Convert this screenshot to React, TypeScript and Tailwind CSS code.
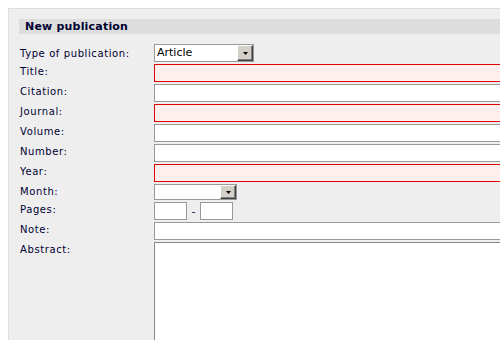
type Row = {
  label: string;
  kind: 'text' | 'required' | 'select' | 'month' | 'pages' | 'area';
};

const rows: Row[] = [
  { label: 'Type of publication:', kind: 'select' },
  { label: 'Title:', kind: 'required' },
  { label: 'Citation:', kind: 'text' },
  { label: 'Journal:', kind: 'required' },
  { label: 'Volume:', kind: 'text' },
  { label: 'Number:', kind: 'text' },
  { label: 'Year:', kind: 'required' },
  { label: 'Month:', kind: 'month' },
  { label: 'Pages:', kind: 'pages' },
  { label: 'Note:', kind: 'text' },
  { label: 'Abstract:', kind: 'area' },
];

const DropButton = () => (
  <div className="flex h-full w-4 items-center justify-center border border-t-white border-l-white border-r-[#404040] border-b-[#404040] bg-[#d4d0c8] shadow-[inset_-1px_-1px_0_#808080]">
    <svg width="5" height="3" viewBox="0 0 5 3">
      <polygon points="0,0 5,0 2.5,3" fill="#000" />
    </svg>
  </div>
);

const Select = ({ value, width }: { value: string; width: string }) => (
  <div className={`flex ${width} items-stretch border border-[#999] bg-white`}>
    <span className="flex-1 pl-[2px] text-[11px] leading-[16px] text-black">{value}</span>
    <DropButton />
  </div>
);

const Field = ({ kind }: { kind: Row['kind'] }) => {
  switch (kind) {
    case 'select':
      return <Select value="Article" width="w-[100px] h-[18px]" />;
    case 'month':
      return <Select value="" width="w-[83px] h-[16px]" />;
    case 'required':
      return <div className="h-[18px] w-[400px] border border-[#d00] bg-[#ffeeee]" />;
    case 'pages':
      return (
        <div className="flex items-center">
          <div className="h-[18px] w-[33px] border border-[#999] bg-white" />
          <span className="w-[13px] text-center text-[10px] text-[#000033]">-</span>
          <div className="h-[18px] w-[33px] border border-[#999] bg-white" />
        </div>
      );
    case 'area':
      return <div className="h-[120px] w-[400px] border border-[#888] bg-white" />;
    default:
      return <div className="h-[18px] w-[400px] border border-[#999] bg-white" />;
  }
};

export default function App() {
  return (
    <div className="h-[340px] w-[500px] overflow-hidden bg-white pl-2 pt-2 font-['Verdana','DejaVu_Sans',sans-serif]">
      <div className="h-[400px] w-[600px] border-l border-t border-[#dddddd] bg-[#eeeeee] pl-[10px] pt-[10px]">
        <div className="h-[15px] bg-[#dddddd] pl-[6px] text-[11px] font-bold leading-[15px] tracking-[0.2px] text-[#000033]">
          New publication
        </div>
        <div className="mt-[10px] flex flex-col gap-[2px] pl-px">
          {rows.map((row, i) => (
            <div key={row.label} className="flex items-start">
              <div
                className={`w-[134px] text-[10px] leading-[12px] tracking-[0.6px] text-[#000033] ${
                  i === 0 ? 'pt-[4px]' : 'pt-[2px]'
                }`}
              >
                {row.label}
              </div>
              <Field kind={row.kind} />
            </div>
          ))}
        </div>
      </div>
    </div>
  );
}
